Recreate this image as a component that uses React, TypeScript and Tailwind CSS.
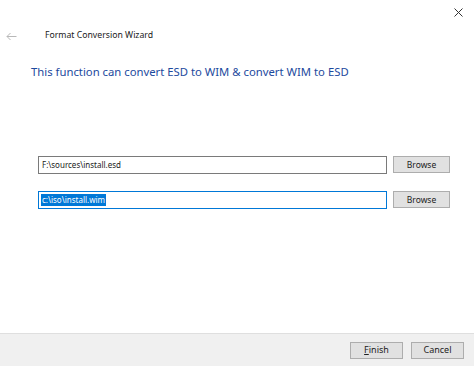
export default function App() {
  return (
    <div
      className="flex h-[366px] w-[474px] flex-col bg-white text-black"
      style={{ fontFamily: '"Noto Sans", "Open Sans", Arial, sans-serif' }}
    >
      {/* title bar */}
      <div className="flex h-[24px] items-center justify-end pr-[11px]">
        <svg width="9" height="9" viewBox="0 0 9 9" className="text-[#333]">
          <path d="M0.5 0.5L8.5 8.5M8.5 0.5L0.5 8.5" stroke="currentColor" strokeWidth="1" />
        </svg>
      </div>

      {/* back + wizard title */}
      <div className="mt-[1px] flex h-[22px] items-center">
        <svg width="11" height="9" viewBox="0 0 11 9" className="ml-[6px] text-[#b8b8b8]">
          <path d="M10.5 4.5H1M4.5 1L1 4.5L4.5 8" stroke="currentColor" strokeWidth="1" fill="none" />
        </svg>
        <span className="ml-[28px] text-[8.7px] text-[#1a1a1a]">Format Conversion Wizard</span>
      </div>

      <h1 className="ml-[31px] mt-[17px] text-[11.3px] text-[#1d4a9e]">
        This function can convert ESD to WIM &amp; convert WIM to ESD
      </h1>

      <div className="ml-[38px] mt-[75px] flex flex-col gap-[17px]">
        <div className="flex items-center">
          <div className="flex h-[18px] w-[349px] items-center border border-[#7a7a7a] px-[3px] text-[8px] text-[#222]">
            F:\sources\install.esd
          </div>
          <button className="ml-[6px] h-[17px] w-[57px] border border-[#adadad] bg-[#e1e1e1] text-[8.5px] text-[#222]">
            Browse
          </button>
        </div>
        <div className="flex items-center">
          <div className="flex h-[18px] w-[349px] items-center border border-[#0078d7] px-[2px] text-[8px]">
            <span className="bg-[#0078d7] px-[1px] text-white">c:\iso\install.wim</span>
          </div>
          <button className="ml-[6px] h-[17px] w-[57px] border border-[#adadad] bg-[#e1e1e1] text-[8.5px] text-[#222]">
            Browse
          </button>
        </div>
      </div>

      <div className="flex-1" />

      <div className="flex h-[33px] items-center justify-end gap-[8px] border-t border-[#dfdfdf] bg-[#f0f0f0] pr-[10px]">
        <button className="h-[17px] w-[53px] border border-[#adadad] bg-[#e1e1e1] text-[9px] text-[#222]">
          <span className="underline">F</span>inish
        </button>
        <button className="h-[17px] w-[53px] border border-[#adadad] bg-[#e1e1e1] text-[9px] text-[#222]">
          Cancel
        </button>
      </div>
    </div>
  );
}
